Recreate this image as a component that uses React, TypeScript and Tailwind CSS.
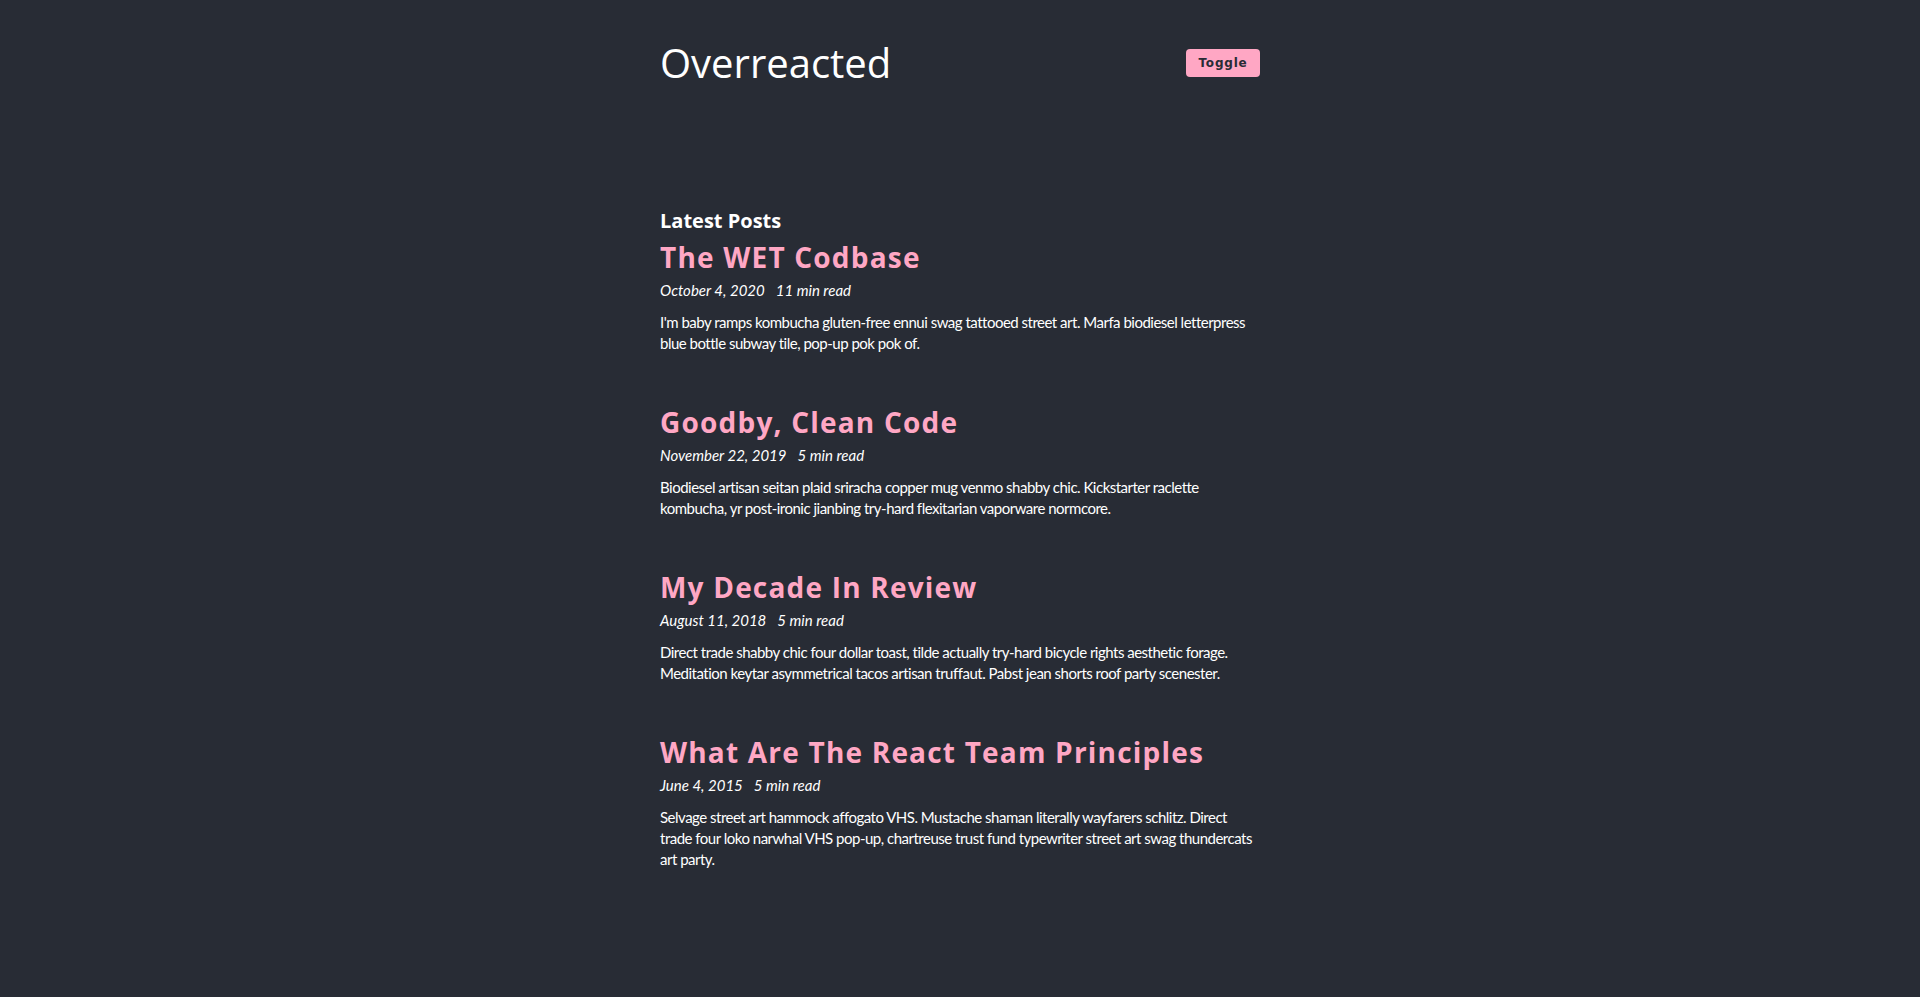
import React, { FC } from "react";

type Post = {
  title: string;
  date: string;
  read: string;
  excerpt: string;
};

const posts: Post[] = [
  {
    title: "The WET Codbase",
    date: "October 4, 2020",
    read: "11 min read",
    excerpt:
      "I'm baby ramps kombucha gluten-free ennui swag tattooed street art. Marfa biodiesel letterpress blue bottle subway tile, pop-up pok pok of.",
  },
  {
    title: "Goodby, Clean Code",
    date: "November 22, 2019",
    read: "5 min read",
    excerpt:
      "Biodiesel artisan seitan plaid sriracha copper mug venmo shabby chic. Kickstarter raclette kombucha, yr post-ironic jianbing try-hard flexitarian vaporware normcore.",
  },
  {
    title: "My Decade In Review",
    date: "August 11, 2018",
    read: "5 min read",
    excerpt:
      "Direct trade shabby chic four dollar toast, tilde actually try-hard bicycle rights aesthetic forage. Meditation keytar asymmetrical tacos artisan truffaut. Pabst jean shorts roof party scenester.",
  },
  {
    title: "What Are The React Team Principles",
    date: "June 4, 2015",
    read: "5 min read",
    excerpt:
      "Selvage street art hammock affogato VHS. Mustache shaman literally wayfarers schlitz. Direct trade four loko narwhal VHS pop-up, chartreuse trust fund typewriter street art swag thundercats art party.",
  },
];

const PostItem: FC<{ post: Post; first: boolean }> = ({ post, first }) => {
  return (
    <article className={first ? "mt-[4px]" : "mt-[50px]"}>
      <h3 className="text-[28px] leading-[36px] font-bold tracking-[1.2px] text-[#ffa7c4]">
        {post.title}
      </h3>
      <div className="mt-[5px] font-['Lato',sans-serif] text-[15px] leading-[20px] italic">
        {post.date}
        <span className="ml-[11px]">{post.read}</span>
      </div>
      <p className="mt-[12px] font-['Lato',sans-serif] text-[15px] leading-[21px] tracking-[-0.5px]">
        {post.excerpt}
      </p>
    </article>
  );
};

const App: FC = () => {
  return (
    <div className="min-h-screen bg-[#282c35] text-white font-['Open_Sans',sans-serif]">
      <div className="mx-auto w-[600px] pt-[39px] pb-20">
        {/* header */}
        <header className="flex items-center justify-between">
          <h1 className="text-[40px] leading-[48px] font-normal">Overreacted</h1>
          <button className="h-[28px] w-[74px] rounded-[4px] bg-[#ffa7c4] font-['DejaVu_Sans',sans-serif] text-[12px] font-bold tracking-[0.8px] text-[#282c35]">
            Toggle
          </button>
        </header>

        {/* posts */}
        <main className="mt-[120px]">
          <h2 className="text-[20px] leading-[28px] font-bold">Latest Posts</h2>
          {posts.map((post, i) => (
            <PostItem key={post.title} post={post} first={i === 0} />
          ))}
        </main>
      </div>
    </div>
  );
};

export default App;
